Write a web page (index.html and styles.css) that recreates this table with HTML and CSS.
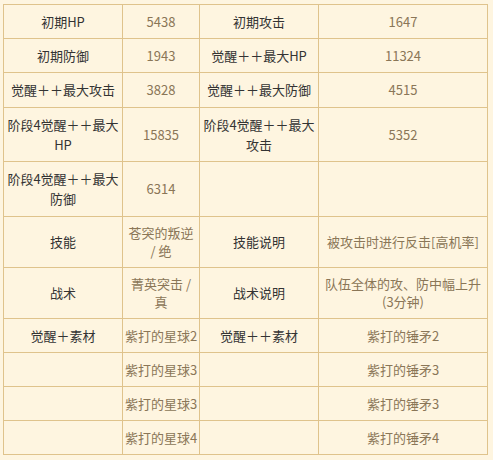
FILE: index.html
```html
<!DOCTYPE html>
<html lang="zh">
<head>
<meta charset="utf-8">
<link rel="stylesheet" href="styles.css">
</head>
<body>
<table class="stats">
  <colgroup>
    <col class="c1"><col class="c2"><col class="c3"><col class="c4">
  </colgroup>
  <tr class="h34"><td class="lab">初期HP</td><td class="val">5438</td><td class="lab">初期攻击</td><td class="val">1647</td></tr>
  <tr class="h34"><td class="lab">初期防御</td><td class="val">1943</td><td class="lab">觉醒＋＋最大HP</td><td class="val">11324</td></tr>
  <tr class="h35"><td class="lab">觉醒＋＋最大攻击</td><td class="val">3828</td><td class="lab">觉醒＋＋最大防御</td><td class="val">4515</td></tr>
  <tr class="h54"><td class="lab">阶段4觉醒＋＋最大HP</td><td class="val">15835</td><td class="lab">阶段4觉醒＋＋最大攻击</td><td class="val">5352</td></tr>
  <tr class="h55"><td class="lab">阶段4觉醒＋＋最大防御</td><td class="val">6314</td><td class="lab"></td><td class="val"></td></tr>
  <tr class="h51"><td class="lab">技能</td><td class="val">苍突的叛逆 / 绝</td><td class="lab">技能说明</td><td class="val">被攻击时进行反击[高机率]</td></tr>
  <tr class="h51"><td class="lab">战术</td><td class="val">菁英突击 / 真</td><td class="lab">战术说明</td><td class="val">队伍全体的攻、防中幅上升(3分钟)</td></tr>
  <tr class="h34"><td class="lab">觉醒＋素材</td><td class="val nw">紫打的星球2</td><td class="lab">觉醒＋＋素材</td><td class="val">紫打的锤矛2</td></tr>
  <tr class="h34"><td class="lab"></td><td class="val nw">紫打的星球3</td><td class="lab"></td><td class="val">紫打的锤矛3</td></tr>
  <tr class="h34"><td class="lab"></td><td class="val nw">紫打的星球3</td><td class="lab"></td><td class="val">紫打的锤矛3</td></tr>
  <tr class="h34"><td class="lab"></td><td class="val nw">紫打的星球4</td><td class="lab"></td><td class="val">紫打的锤矛4</td></tr>
</table>
</body>
</html>
```
FILE: styles.css
```css
html, body {
  margin: 0;
  background: #fef5e0;
}
body {
  padding: 4px 0 0 3px;
  font-family: "Noto Sans CJK SC", "Noto Sans", sans-serif;
  font-size: 13px;
}
.stats {
  border-collapse: collapse;
  table-layout: fixed;
  width: 484px;
}
.c1 { width: 119px; }
.c2 { width: 77px; }
.c3 { width: 119px; }
.c4 { width: 169px; }
.stats td {
  border: 1px solid #dfc38c;
  text-align: center;
  vertical-align: middle;
  padding: 0 2px;
}
.lab {
  color: #333333;
  line-height: 20px;
}
.val {
  color: #8a7657;
  line-height: 18px;
}
.nw {
  white-space: nowrap;
  padding: 0;
}
.h34 { height: 34px; }
.h35 { height: 35px; }
.h54 { height: 54px; }
.h55 { height: 55px; }
.h51 { height: 51px; }
```
